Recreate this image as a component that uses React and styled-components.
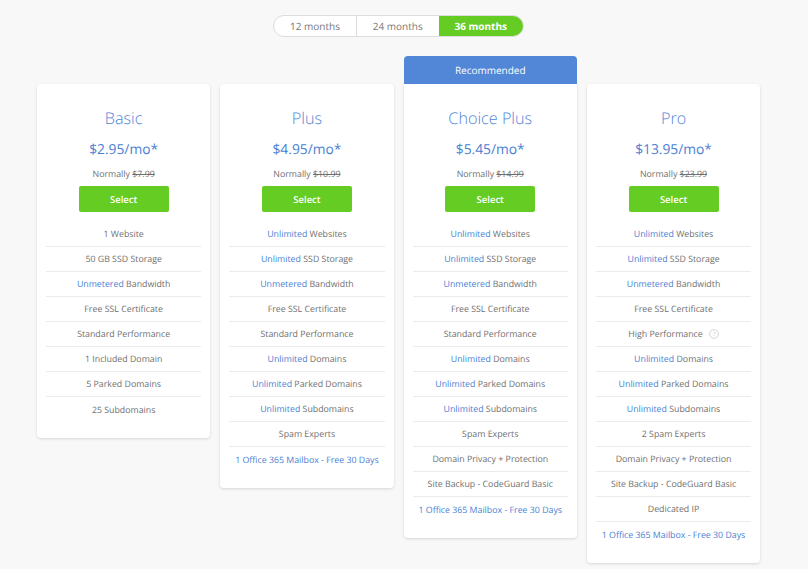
import styled, { createGlobalStyle } from "styled-components";

const GlobalStyle = createGlobalStyle`
  html, body {
    margin: 0;
    padding: 0;
    background: #f8f8f8;
    font-family: "Open Sans", "Liberation Sans", sans-serif;
    text-rendering: geometricPrecision;
  }
`;

const Page = styled.div`
  width: 808px;
  height: 569px;
  overflow: hidden;
  padding-top: 15px;
  box-sizing: border-box;
`;

const Toggle = styled.div`
  display: flex;
  width: 251px;
  height: 22px;
  margin: 0 0 0 273px;
  box-sizing: border-box;
  border: 1px solid #dcdcdc;
  border-radius: 11px;
  background: #fff;
  overflow: hidden;
`;

const Term = styled.div`
  flex: 0 0 ${(props) => props.$width}px;
  display: flex;
  align-items: center;
  justify-content: center;
  box-sizing: border-box;
  font-size: 10px;
  color: ${(props) => (props.$active ? "#fff" : "#777")};
  font-weight: ${(props) => (props.$active ? 700 : 400)};
  background: ${(props) => (props.$active ? "#65cc23" : "transparent")};
  border-right: ${(props) => (props.$divider ? "1px solid #dcdcdc" : "none")};
`;

const Plans = styled.div`
  display: flex;
  align-items: flex-start;
  gap: 10px;
  margin: 47px 0 0 37px;
`;

const Card = styled.div`
  position: relative;
  width: 173.3px;
  box-sizing: border-box;
  padding: 23px 9px 16px;
  background: #fff;
  border-radius: ${(props) => (props.$recommended ? "0 0 4px 4px" : "4px")};
  box-shadow: 0 1px 3px rgba(0, 0, 0, 0.14);
  text-align: center;
`;

const Ribbon = styled.div`
  position: absolute;
  left: 0;
  right: 0;
  bottom: 100%;
  height: 28px;
  display: flex;
  align-items: center;
  justify-content: center;
  background: #5286d6;
  border-radius: 4px 4px 0 0;
  color: #fff;
  font-size: 10px;
`;

const Name = styled.div`
  font-size: 16.2px;
  font-weight: 300;
  line-height: 22px;
  color: #5286d6;
`;

const Price = styled.div`
  margin-top: 10px;
  font-size: 13.8px;
  line-height: 22px;
  color: #4a7fd4;
`;

const Normally = styled.div`
  margin-top: 5px;
  font-size: 8.8px;
  line-height: 16px;
  color: #6f6f6f;

  s {
    color: #6f6f6f;
  }
`;

const SelectButton = styled.div`
  width: 90px;
  height: 26px;
  margin: 4px auto 10px;
  display: flex;
  align-items: center;
  justify-content: center;
  background: #65cc23;
  border-radius: 2px;
  color: #fff;
  font-size: 9.5px;
  font-weight: 600;
`;

const Feature = styled.div`
  height: 25px;
  display: flex;
  align-items: center;
  justify-content: center;
  box-sizing: border-box;
  font-size: 8.8px;
  color: #6f6f6f;
  white-space: pre;
  border-bottom: ${(props) => (props.$last ? "none" : "1px solid #ebebeb")};
`;

const Accent = styled.span`
  color: #4a7fd4;
`;

const Hint = styled.svg`
  width: 10px;
  height: 10px;
  margin-left: 6px;
`;

const HintIcon = () => (
  <Hint viewBox="0 0 10 10">
    <circle cx="5" cy="5" r="4.4" fill="none" stroke="#c9c9c9" strokeWidth="0.8" />
    <text x="5" y="7.2" fontSize="6" textAnchor="middle" fill="#c0c0c0" fontFamily="Open Sans">
      ?
    </text>
  </Hint>
);

const U = "Unlimited";
const M = "Unmetered";
const MAILBOX = { mail: "1 Office 365 Mailbox - Free 30 Days" };

const plans = [
  {
    name: "Basic",
    price: "$2.95/mo*",
    was: "$7.99",
    features: [
      ["", "1 Website"],
      ["", "50 GB SSD Storage"],
      [M, " Bandwidth"],
      ["", "Free SSL Certificate"],
      ["", "Standard Performance"],
      ["", "1 Included Domain"],
      ["", "5 Parked Domains"],
      ["", "25 Subdomains"],
    ],
  },
  {
    name: "Plus",
    price: "$4.95/mo*",
    was: "$10.99",
    features: [
      [U, " Websites"],
      [U, " SSD Storage"],
      [M, " Bandwidth"],
      ["", "Free SSL Certificate"],
      ["", "Standard Performance"],
      [U, " Domains"],
      [U, " Parked Domains"],
      [U, " Subdomains"],
      ["", "Spam Experts"],
      [MAILBOX.mail, ""],
    ],
  },
  {
    name: "Choice Plus",
    price: "$5.45/mo*",
    was: "$14.99",
    recommended: true,
    features: [
      [U, " Websites"],
      [U, " SSD Storage"],
      [M, " Bandwidth"],
      ["", "Free SSL Certificate"],
      ["", "Standard Performance"],
      [U, " Domains"],
      [U, " Parked Domains"],
      [U, " Subdomains"],
      ["", "Spam Experts"],
      ["", "Domain Privacy + Protection"],
      ["", "Site Backup - CodeGuard Basic"],
      [MAILBOX.mail, ""],
    ],
  },
  {
    name: "Pro",
    price: "$13.95/mo*",
    was: "$23.99",
    features: [
      [U, " Websites"],
      [U, " SSD Storage"],
      [M, " Bandwidth"],
      ["", "Free SSL Certificate"],
      ["", "High Performance", true],
      [U, " Domains"],
      [U, " Parked Domains"],
      [U, " Subdomains"],
      ["", "2 Spam Experts"],
      ["", "Domain Privacy + Protection"],
      ["", "Site Backup - CodeGuard Basic"],
      ["", "Dedicated IP"],
      [MAILBOX.mail, ""],
    ],
  },
];

export default function App() {
  return (
    <Page>
      <GlobalStyle />
      <Toggle>
        <Term $width={83} $divider>12 months</Term>
        <Term $width={81.5}>24 months</Term>
        <Term $width={84.5} $active>36 months</Term>
      </Toggle>
      <Plans>
        {plans.map((plan) => (
          <Card key={plan.name} $recommended={plan.recommended}>
            {plan.recommended ? <Ribbon>Recommended</Ribbon> : null}
            <Name>{plan.name}</Name>
            <Price>{plan.price}</Price>
            <Normally>
              Normally <s>{plan.was}</s>
            </Normally>
            <SelectButton>Select</SelectButton>
            {plan.features.map(([accent, rest, hint], i) => (
              <Feature key={i} $last={i === plan.features.length - 1}>
                {accent ? <Accent>{accent}</Accent> : null}
                {rest}
                {hint ? <HintIcon /> : null}
              </Feature>
            ))}
          </Card>
        ))}
      </Plans>
    </Page>
  );
}
